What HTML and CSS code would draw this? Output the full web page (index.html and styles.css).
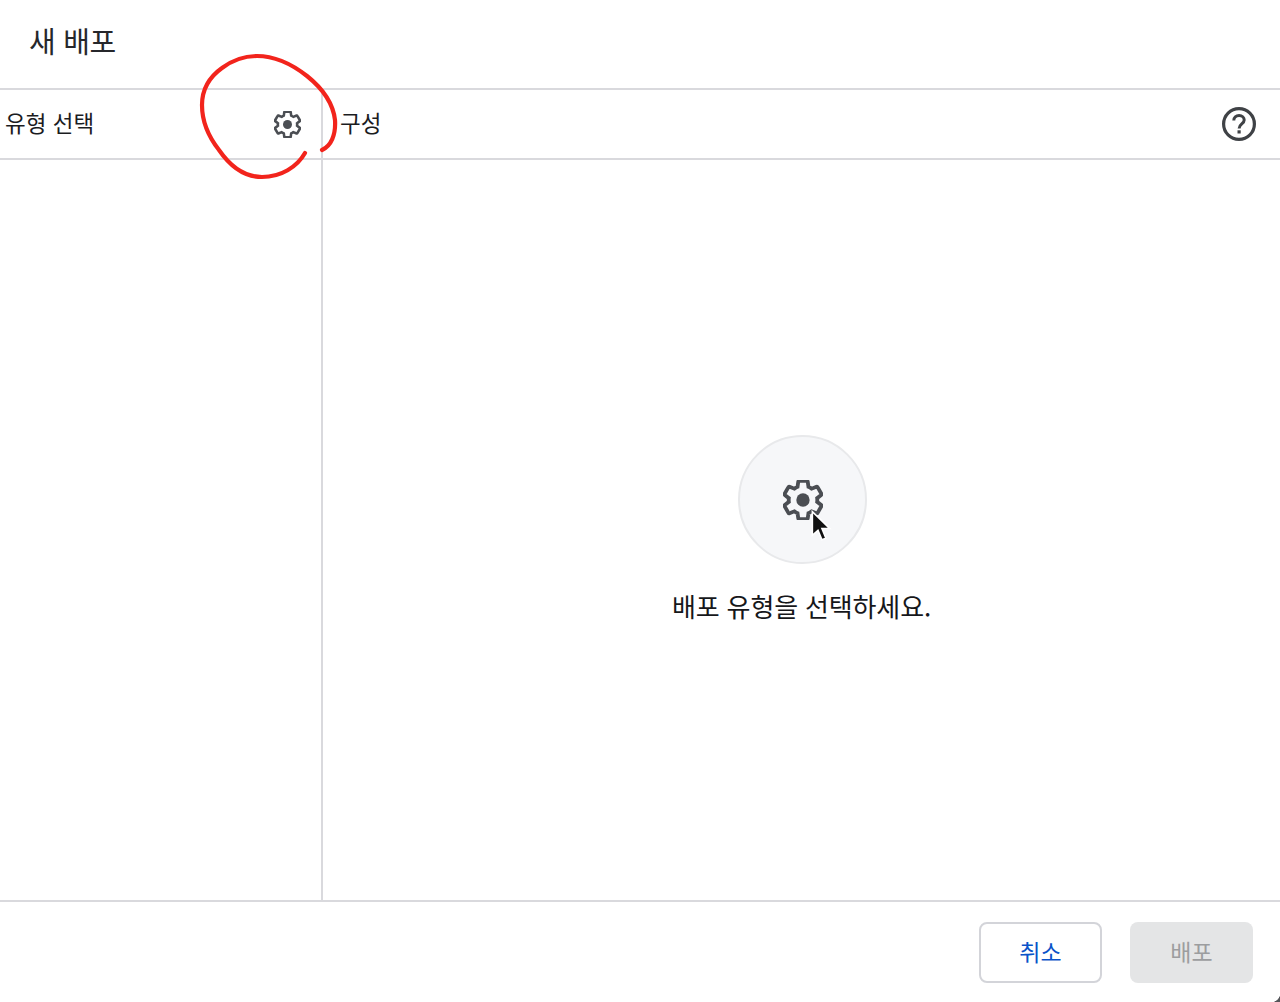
FILE: index.html
```html
<!DOCTYPE html>
<html lang="ko">
<head>
    <meta charset="UTF-8">
    <title>새 배포</title>
    <link rel="stylesheet" href="styles.css">
</head>
<body>
    <div class="dialog">
        <h1 class="dialog-title">새 배포</h1>
        <div class="dialog-body">
            <div class="type-col">
                <div class="col-head type-head">
                    <span>유형 선택</span>
                    <svg class="gear gear-small" viewBox="1.5 1.5 21 21">
                        <use href="#gear-shape"></use>
                    </svg>
                </div>
            </div>
            <div class="config-col">
                <div class="col-head config-head">
                    <span>구성</span>
                    <svg class="help-icon" viewBox="0 0 36 36">
                        <circle cx="18" cy="18" r="15.4" fill="none" stroke="#3f4246" stroke-width="3.2"></circle>
                        <path d="M12.800 14.600c0-3 2.300-5 5.300-5 3 0 5.100 1.800 5.100 4.400 0 3.900-5.100 4-5.100 8.400" fill="none" stroke="#3f4246" stroke-width="3"></path>
                        <rect x="16.500" y="24.300" width="3.200" height="3.200" fill="#3f4246"></rect>
                    </svg>
                </div>
                <div class="empty-state">
                    <div class="empty-circle">
                        <svg class="gear gear-large" viewBox="1.5 1.5 21 21">
                            <use href="#gear-shape"></use>
                        </svg>
                        <svg class="cursor" viewBox="0 0 22 32">
                            <path d="M2 1.500v21l5-4.500 3.500 8.500 3.500-1.500-3.500-8.500h7z" fill="#111" stroke="#fff" stroke-width="1.400"></path>
                        </svg>
                    </div>
                    <p class="empty-text">배포 유형을 선택하세요.</p>
                </div>
            </div>
        </div>
        <div class="dialog-foot">
            <button class="btn btn-cancel" type="button">취소</button>
            <button class="btn btn-deploy" type="button">배포</button>
        </div>

        <!-- 빨간 펜 표시 -->
        <svg class="scribble" viewBox="0 0 1280 1002">
            <path d="M305 153C297 167 281 177 262 177C244 177 230 166 219 150C208 136 202 122 202 105C202 90 208 78 222 68C234 59 246 56 257 56C275 56 293 65 307 76C322 88 333 103 335 120C336 135 331 146 322 150" fill="none" stroke="#f2241c" stroke-width="4.200" stroke-linecap="round"></path>
        </svg>
        <div class="window-corner"></div>
    </div>

    <svg class="defs">
        <defs>
            <g id="gear-shape">
                <path d="M19.430 12.980c.04-.32.07-.64.07-.98s-.03-.66-.07-.98l2.110-1.650c.19-.15.24-.42.12-.64l-2-3.460c-.12-.22-.39-.3-.61-.22l-2.490 1c-.52-.4-1.080-.73-1.690-.98l-.38-2.650C14.460 2.180 14.250 2 14 2h-4c-.25 0-.46.18-.49.42l-.38 2.650c-.61.25-1.170.59-1.690.98l-2.490-1c-.23-.09-.49 0-.61.22l-2 3.460c-.13.22-.07.49.12.64l2.110 1.650c-.04.32-.07.65-.07.98s.03.66.07.98l-2.110 1.650c-.19.15-.24.42-.12.64l2 3.460c.12.22.39.3.61.22l2.490-1c.52.4 1.080.73 1.690.98l.38 2.650c.03.24.24.42.49.42h4c.25 0 .46-.18.49-.42l.38-2.650c.61-.25 1.170-.59 1.690-.98l2.490 1c.23.09.49 0 .61-.22l2-3.460c.12-.22.07-.49-.12-.64l-2.110-1.650z" fill="none" stroke="#4b4e53" stroke-width="2"></path>
                <circle cx="12" cy="12" r="3.500" fill="#4b4e53"></circle>
            </g>
        </defs>
    </svg>
</body>
</html>
```

FILE: styles.css
```css
* { box-sizing: border-box; }
html, body { margin: 0; height: 100%; }
body { font-family: "Noto Sans CJK KR", "Liberation Sans", sans-serif; background: #fff; color: #1b1c1f; overflow: hidden; }

.dialog { position: relative; display: flex; flex-direction: column; height: 1002px; }
.dialog-title { margin: 0; height: 90px; padding: 0 0 0 29px; border-bottom: 2px solid #d9d9dd; font-size: 29px; font-weight: 400; line-height: 80px; letter-spacing: -0.3px; color: #26272b; }

.dialog-body { flex: 1; display: flex; min-height: 0; }
.type-col { width: 323px; border-right: 2px solid #d9d9dd; }
.config-col { flex: 1; display: flex; flex-direction: column; }

.col-head { display: flex; align-items: center; justify-content: space-between; height: 70px; border-bottom: 2px solid #d9d9dd; font-size: 22.500px; }
.col-head span { padding-bottom: 4px; }
.type-head { padding: 0 20px 0 5px; }
.config-head { padding: 0 23px 0 17px; }

.gear { display: block; }
.gear-small { width: 27px; height: 27px; }
.gear-large { width: 40px; height: 40px; }
.help-icon { width: 36px; height: 36px; }

.empty-state { flex: 1; display: flex; flex-direction: column; align-items: center; padding-top: 275px; }
.empty-circle { position: relative; display: flex; align-items: center; justify-content: center; width: 129px; height: 129px; margin-left: 2px; border: 2px solid #e8e9eb; border-radius: 50%; background: #f6f7f9; }
.cursor { position: absolute; left: 70px; top: 73px; width: 25px; height: 36px; }
.empty-text { margin: 23px 0 0; font-size: 26px; line-height: 38px; letter-spacing: -0.15px; color: #16171a; }

.dialog-foot { display: flex; justify-content: flex-end; gap: 28px; height: 102px; padding: 20px 27px 0 0; border-top: 2px solid #d9d9dd; }
.btn { width: 123px; height: 61px; padding: 0 0 4px; border-radius: 8px; font-family: inherit; font-size: 23px; }
.btn-cancel { border: 2px solid #d3d4d9; background: #fff; color: #0a53c9; }
.btn-deploy { border: none; background: #e4e5e6; color: #9c9d9f; }

.scribble { position: absolute; left: 0; top: 0; width: 1280px; height: 1002px; pointer-events: none; }
.window-corner { position: absolute; right: 0; bottom: 0; width: 9px; height: 9px; background: radial-gradient(circle at 0 0, transparent 9px, #55565a 9.500px); }
.defs { position: absolute; width: 0; height: 0; }
```
